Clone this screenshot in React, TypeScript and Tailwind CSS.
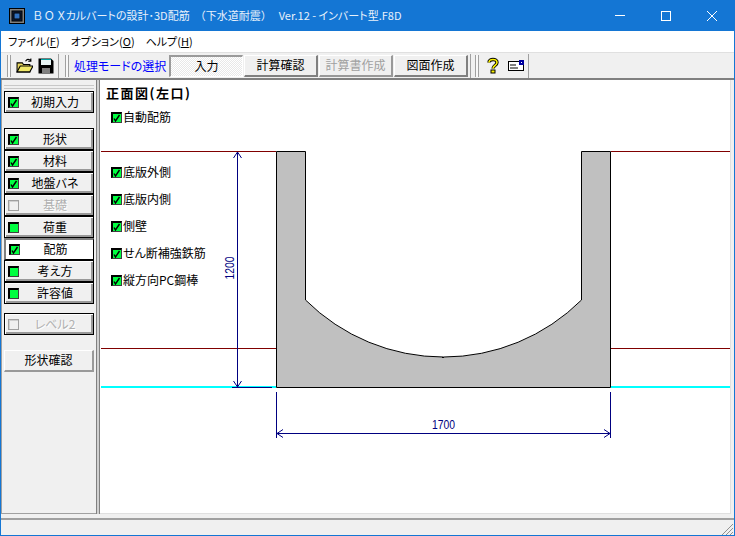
import type { ReactNode } from 'react';

const FONT = "font-['Noto_Sans_CJK_JP','Liberation_Sans',sans-serif]";

function Check({ state, disabled }: { state: 'checked' | 'empty'; disabled?: boolean }) {
  if (disabled) {
    return <span className="block w-[11px] h-[11px] shrink-0 border border-[#a0a0a0] bg-[#f0f0f0] shadow-[inset_1px_1px_0_#d0d0d0]" />;
  }
  return (
    <span className="block w-[11px] h-[11px] shrink-0 bg-[#00ff40] border-t-2 border-l-2 border-r border-b border-t-black border-l-black border-r-[#404040] border-b-[#404040] relative">
      {state === 'checked' && (
        <svg viewBox="0 0 8 8" className="absolute left-0 top-0 w-[8px] h-[8px]">
          <path d="M1 4.5L2.5 7L6.5 1" fill="none" stroke="#000" strokeWidth="1.4" />
        </svg>
      )}
    </span>
  );
}

function SideButton({
  label,
  state = 'checked',
  disabled,
  active,
}: {
  label: string;
  state?: 'checked' | 'empty';
  disabled?: boolean;
  active?: boolean;
}) {
  return (
    <div
      className={`h-[22px] w-[90px] border border-black flex items-center ${
        active
          ? 'bg-white border-t-[2px] border-t-[#808080] border-l-[2px] border-l-[#808080] pl-[3px]'
          : 'bg-[#f0f0f0] pl-[3px] shadow-[inset_1px_1px_0_#fff,inset_-2px_-2px_0_#999]'
      }`}
    >
      <Check state={state} disabled={disabled} />
      <span
        className={`flex-1 text-center text-[12px] leading-none pr-[2px] pb-px ${
          disabled ? 'text-[#b0b0b0] [text-shadow:1px_1px_0_#fff]' : 'text-black'
        }`}
      >
        {label}
      </span>
    </div>
  );
}

function Grip() {
  return <div className="w-[4px] h-[22px] border-x border-[#a0a0a0] bg-[#f8f8f8]" />;
}

function ToolButton({ label, pressed, disabled }: { label: string; pressed?: boolean; disabled?: boolean }) {
  return (
    <div
      className={`w-[74px] h-[22px] flex items-center justify-center text-[12px] leading-none ${
        pressed
          ? 'bg-[repeating-conic-gradient(#e8e8e8_0_25%,#fff_0_50%)] bg-[length:2px_2px] border-t-[2px] border-l-[2px] border-[#9a9a9a] border-r border-b border-r-white border-b-white'
          : disabled
            ? 'bg-[#f0f0f0] text-[#a0a0a0] border-t border-l border-white border-r-[2px] border-b-[2px] border-r-[#999] border-b-[#999]'
            : 'bg-[#f0f0f0] text-black border-t border-l border-white border-r-[2px] border-b-[2px] border-r-[#808080] border-b-[#808080]'
      }`}
    >
      {label}
    </div>
  );
}

function CanvasCheck({ children }: { children: ReactNode }) {
  return (
    <div className="flex items-center h-[14px] text-[12px] leading-none text-black">
      <Check state="checked" />
      <span className="ml-[1px]">{children}</span>
    </div>
  );
}

function Drawing() {
  return (
    <svg className="absolute left-0 top-0 w-[630px] h-[433px]" viewBox="100 80 630 433" shapeRendering="crispEdges">
      <path d="M101 151.5H276M611 151.5H730" stroke="#800000" />
      <path d="M101 348.5H276M611 348.5H730" stroke="#800000" />
      <path d="M101 387H276M611 387H730" stroke="#00ffff" strokeWidth="2" />
      <path
        d="M276.5 151.5H305.5V300 A195.5 195.5 0 0 0 581.5 300 V151.5H610.5V387.5H276.5Z"
        fill="#c0c0c0"
        stroke="#000"
        shapeRendering="auto"
      />
      <rect x="442" y="357" width="2" height="1" fill="#000" />
      <g stroke="#000080" fill="none">
        <path d="M237.5 152V387M232 387.5H272" />
        <path d="M276.5 392V438M610.5 392V438M276 433.5H610" />
        <g shapeRendering="auto">
          <path d="M233.5 158L237.5 152L241.5 158M233.5 381L237.5 387L241.5 381" />
          <path d="M283 429.5L277 433.5L283 437.5M604 429.5L610 433.5L604 437.5" />
        </g>
      </g>
      <text x="443.5" y="429" textAnchor="middle" fontSize="12" fill="#000080" fontFamily="Liberation Sans" textLength="23" lengthAdjust="spacingAndGlyphs">
        1700
      </text>
      <text
        transform="translate(234 268) rotate(-90)"
        textAnchor="middle"
        fontSize="12"
        fill="#000080"
        fontFamily="Liberation Sans"
        textLength="23"
        lengthAdjust="spacingAndGlyphs"
      >
        1200
      </text>
    </svg>
  );
}

export default function App() {
  return (
    <div className={`${FONT} [font-feature-settings:'palt'] w-[735px] h-[536px] flex flex-col bg-[#f0f0f0] border-x border-b border-[#1476d4] overflow-hidden`}>
      {/* title bar */}
      <div className="h-[31px] shrink-0 bg-[#1476d4] flex items-center text-white relative -mx-px">
        <svg viewBox="0 0 16 16" className="w-[16px] h-[16px] ml-[9px]">
          <rect x="0.5" y="0.5" width="15" height="15" fill="#808080" stroke="#000" />
          <rect x="3" y="3" width="10" height="10" fill="#102040" stroke="#000" />
          <rect x="5" y="5" width="6" height="6" fill="#3070c0" stroke="#000" />
        </svg>
        <span className="ml-[8px] text-[11px] leading-none whitespace-nowrap text-[#e8f1fb]">
          Ｂ Ｏ Ｘカルバートの設計･3D配筋
          <span className="ml-[5px] [font-feature-settings:normal]">（下水道耐震）</span>
          <span className="ml-[7px]">Ver.12 - インバート型.F8D</span>
        </span>
        <div className="ml-auto flex items-center h-full">
          <div className="w-[46px] h-full flex items-center justify-center">
            <div className="w-[10px] h-px bg-white" />
          </div>
          <div className="w-[46px] h-full flex items-center justify-center">
            <div className="w-[10px] h-[10px] border border-white" />
          </div>
          <div className="w-[46px] h-full flex items-center justify-center">
            <svg viewBox="0 0 10 10" className="w-[10px] h-[10px]">
              <path d="M0 0L10 10M10 0L0 10" stroke="#fff" />
            </svg>
          </div>
        </div>
      </div>

      {/* menu */}
      <div className="h-[21px] shrink-0 bg-white flex items-center text-[11px] leading-none text-black pl-[7px] gap-[11px]">
        <span>ファイル(<u>F</u>)</span>
        <span>オプション(<u>O</u>)</span>
        <span>ヘルプ(<u>H</u>)</span>
      </div>

      {/* toolbar */}
      <div className="h-[28px] shrink-0 flex items-center border-t border-[#e0e0e0] border-b-[2px] border-b-[#808080] relative">
        <div className="ml-[6px]"><Grip /></div>
        <svg viewBox="0 0 16 16" className="w-[17px] h-[17px] ml-[5px]">
          <path d="M1 5.5H6L7 7H13V14H1Z" fill="#e8d860" stroke="#000" />
          <path d="M1 14L4 8.5H16L13 14Z" fill="#f0e868" stroke="#000" />
          <path d="M9 4C10 2 12 1.5 14 3.5M14 1.5V4H11.5" fill="none" stroke="#000" />
        </svg>
        <svg viewBox="0 0 16 16" className="w-[16px] h-[16px] ml-[5px]">
          <path d="M0.5 0.5H13L15.5 3V15.5H0.5Z" fill="#000" />
          <rect x="3" y="1" width="10" height="6" fill="#e8f4f4" />
          <rect x="3" y="1" width="10" height="1" fill="#00a0a0" />
          <rect x="4" y="10" width="8" height="5" fill="#808080" />
        </svg>
        <div className="w-px h-[24px] bg-[#a0a0a0] ml-[4px]" />
        <div className="ml-[6px]"><Grip /></div>
        <span className="ml-[5px] w-[95px] text-[12px] leading-none text-[#0000ff] whitespace-nowrap">処理モードの選択</span>
        <div className="flex gap-[1px]">
          <ToolButton label="入力" pressed />
          <ToolButton label="計算確認" />
          <ToolButton label="計算書作成" disabled />
          <ToolButton label="図面作成" />
        </div>
        <div className="w-px h-[24px] bg-[#a0a0a0] ml-[2px]" />
        <div className="ml-[4px]"><Grip /></div>
        <svg viewBox="0 0 12 16" className="w-[12px] h-[17px] ml-[8px]">
          <path d="M2 5C2 1 10 1 10 5C10 8 6 8 6 11" fill="none" stroke="#000" strokeWidth="3.4" />
          <path d="M2 5C2 1 10 1 10 5C10 8 6 8 6 11" fill="none" stroke="#f8f000" strokeWidth="1.6" />
          <rect x="4" y="12.5" width="4" height="3" fill="#f8f000" stroke="#000" />
        </svg>
        <svg viewBox="0 0 16 11" className="w-[16px] h-[11px] ml-[9px]">
          <rect x="0.5" y="1.5" width="15" height="9" fill="#fff" stroke="#000" />
          <path d="M2 5H8M2 8H10" stroke="#000" />
          <rect x="11" y="0" width="5" height="5" fill="#0000a0" />
          <rect x="13" y="2" width="1" height="1" fill="#fff" />
        </svg>
        <div className="w-px h-[24px] bg-[#a0a0a0] ml-[4px]" />
      </div>

      {/* body */}
      <div className="h-[434px] shrink-0 flex">
        <aside className="w-[95px] shrink-0 flex flex-col items-start pl-[2px] pt-[5px] border-l border-b border-[#a0a0a0]">
          <div className="w-[90px] h-[4px] border-y border-[#c8c8c8]" />
          <div className="mt-[2px]"><SideButton label="初期入力" /></div>
          <div className="mt-[15px] flex flex-col">
            <SideButton label="形状" />
            <SideButton label="材料" />
            <SideButton label="地盤バネ" />
            <SideButton label="基礎" state="empty" disabled />
            <SideButton label="荷重" state="empty" />
            <SideButton label="配筋" active />
            <SideButton label="考え方" state="empty" />
            <SideButton label="許容値" state="empty" />
          </div>
          <div className="mt-[9px]"><SideButton label="レベル2" state="empty" disabled /></div>
          <div className="mt-[15px] h-[22px] w-[90px] bg-[#f0f0f0] flex items-center justify-center text-[12px] leading-none pb-px border-t border-l border-white border-r-[2px] border-b-[2px] border-r-[#999] border-b-[#999]">
            形状確認
          </div>
        </aside>
        <div className="w-[4px] shrink-0 bg-[#d0d0d0] border-x border-x-[#808080]" />
        <main className="w-[631px] shrink-0">
          <div className="h-[434px] bg-white relative border-r border-b border-[#e0e0e0]">
            <Drawing />
            <div className="relative pt-[6px] pl-[6px] text-[13px] leading-none font-bold tracking-[1.5px] text-black">正面図(左口)</div>
            <div className="relative pl-[11px] mt-[11px]">
              <CanvasCheck>自動配筋</CanvasCheck>
            </div>
            <div className="relative pl-[11px] mt-[41px] flex flex-col gap-[13px]">
              <CanvasCheck>底版外側</CanvasCheck>
              <CanvasCheck>底版内側</CanvasCheck>
              <CanvasCheck>側壁</CanvasCheck>
              <CanvasCheck>せん断補強鉄筋</CanvasCheck>
              <CanvasCheck>縦方向PC鋼棒</CanvasCheck>
            </div>
          </div>
        </main>
      </div>

      {/* status bar */}
      <div className="flex-1 min-h-0 flex flex-col justify-end">
        <div className="h-[17px] border-t-[2px] border-[#a0a0a0] relative">
          <svg viewBox="0 0 12 12" className="absolute right-[1px] bottom-0 w-[12px] h-[12px]">
            <path d="M1 12L12 1M5 12L12 5M9 12L12 9" stroke="#909090" fill="none" />
          </svg>
        </div>
      </div>
    </div>
  );
}
